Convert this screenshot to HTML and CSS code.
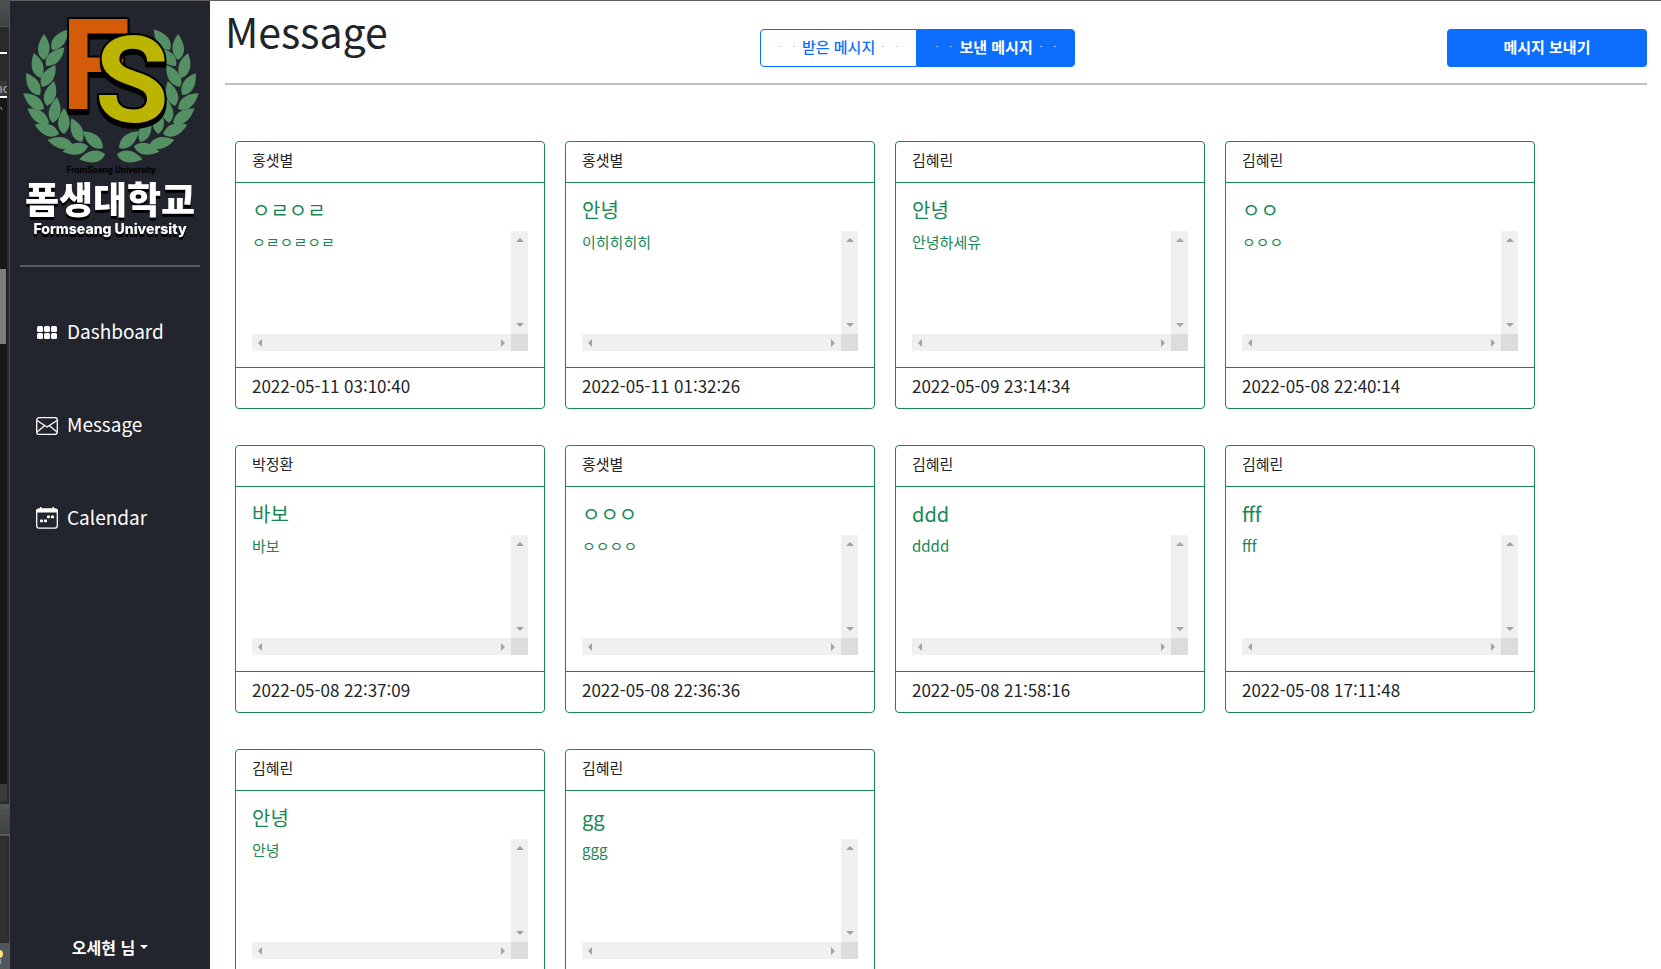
FILE: index.html
```html
<!DOCTYPE html>
<html lang="ko">
<head>
<meta charset="utf-8">
<title>Message</title>
<link rel="stylesheet" href="styles.css">
</head>
<body>
<svg class="defs" width="0" height="0" aria-hidden="true">
  <defs>
    <path id="leaf" d="M0 0C5 -8 15 -8 26 0C17 7 7 8 0 0Z"/>
  </defs>
</svg>
<div class="app">
  <div class="edge" aria-hidden="true">
    <svg class="edge-top" width="10" height="344" viewBox="0 0 10 344">
      <defs><linearGradient id="bar" x1="0" y1="0" x2="0" y2="1"><stop offset="0" stop-color="#4f5052"/><stop offset="1" stop-color="#404143"/></linearGradient></defs>
      <rect width="9" height="26" fill="url(#bar)"/>
      <rect y="26" width="9" height="1" fill="#555"/>
      <rect y="81" width="7" height="15" fill="#383838"/>
      <rect y="52" width="7" height="2" fill="#fff"/>
      <text x="-4" y="93" class="edge-text">ac</text>
      <rect x="7" y="54" width="2" height="42" fill="#2a2a2a"/>
      <rect y="96" width="7" height="2" fill="#fff"/>
      <rect y="98" width="7" height="246" fill="#171717"/>
      <path d="M-2 110L1 107L2 110" stroke="#888" fill="none"/>
      <rect y="269" width="6" height="75" fill="#7d7d7d"/>
    </svg>
    <div class="edge-fill"></div>
    <svg class="edge-bottom" width="10" height="185" viewBox="0 0 10 185">
      <rect width="7" height="18" fill="#3a3a3a"/>
      <rect y="20" width="10" height="5" fill="#50575a"/>
      <rect y="25" width="10" height="25" fill="url(#bar)"/>
      <rect y="50" width="10" height="2" fill="#5a5a5a"/>
      <rect y="53" width="7" height="105" fill="#303030"/>
      <rect y="159" width="10" height="26" fill="#50565a"/>
      <circle cx="-1" cy="170" r="4" fill="#ffe27a"/>
      <rect y="175" width="1" height="5" fill="#7fa0c8"/>
    </svg>
  </div>

  <nav class="sidebar">
    <a class="logo" href="#">
      <svg width="200" height="249" viewBox="10 1 200 249" role="img" aria-label="Formseang University">
        <g fill="#559064">
          <g id="branch">
            <use href="#leaf" transform="translate(52 50) rotate(-52)"/>
            <use href="#leaf" transform="translate(44 60) rotate(-90)"/>
            <use href="#leaf" transform="translate(46 66) rotate(-45)"/>
            <use href="#leaf" transform="translate(41 78) rotate(-106)"/>
            <use href="#leaf" transform="translate(42 87) rotate(-59)"/>
            <use href="#leaf" transform="translate(40 95) rotate(-122)"/>
            <use href="#leaf" transform="translate(47 106) rotate(-74)"/>
            <use href="#leaf" transform="translate(44 109) rotate(-143)"/>
            <use href="#leaf" transform="translate(53 123) rotate(-81)"/>
            <use href="#leaf" transform="translate(49 123) rotate(-146)"/>
            <use href="#leaf" transform="translate(64 134) rotate(-90)"/>
            <use href="#leaf" transform="translate(59 134) rotate(-159)"/>
            <use href="#leaf" transform="translate(82 142) rotate(-114)"/>
            <use href="#leaf" transform="translate(73 145) rotate(-169)"/>
            <use href="#leaf" transform="translate(103 148) rotate(-140)"/>
            <use href="#leaf" transform="translate(88 146) rotate(167)"/>
            <use href="#leaf" transform="translate(105 154) rotate(168)"/>
          </g>
          <use href="#branch" transform="translate(222 0) scale(-1 1)"/>
        </g>
        <text class="mono mono-f" x="61" y="109">F</text>
        <text class="mono mono-s" x="95" y="122">S</text>
        <text class="logo-small" x="111" y="173">FromSaeng University</text>
        <text class="logo-ko" x="110" y="214">폼생대학교</text>
        <text class="logo-en" x="110" y="234">Formseang University</text>
      </svg>
    </a>
    <hr class="side-line">
    <ul class="menu">
      <li><a href="#"><svg width="22" height="22" viewBox="0 0 22 22" fill="#fff"><rect x="1" y="5" width="6" height="6" rx="1.5"/><rect x="8" y="5" width="6" height="6" rx="1.5"/><rect x="15" y="5" width="6" height="6" rx="1.5"/><rect x="1" y="12" width="6" height="6" rx="1.5"/><rect x="8" y="12" width="6" height="6" rx="1.5"/><rect x="15" y="12" width="6" height="6" rx="1.5"/></svg><span>Dashboard</span></a></li>
      <li><a href="#"><svg width="22" height="22" viewBox="0 0 22 22" fill="none" stroke="#fff" stroke-width="1.3"><rect x=".7" y="3.7" width="20.6" height="16.6" rx="2.4"/><path d="M1 6.5L11 13L21 6.5M1 18L8.8 11.6M21 18L13.2 11.6"/></svg><span>Message</span></a></li>
      <li><a href="#"><svg width="22" height="22" viewBox="0 0 22 22" fill="#fff"><rect x=".7" y="2.2" width="20.6" height="19" rx="2.4" fill="none" stroke="#fff" stroke-width="1.3"/><path d="M0 5.5V4Q0 1.5 2.5 1.5H4V0H5.5V1.5H16.5V0H18V1.5H19.5Q22 1.5 22 4V5.5Z"/><rect x="11" y="8.5" width="3" height="2.7" rx=".6"/><rect x="15" y="8.5" width="3" height="2.7" rx=".6"/><rect x="4" y="12.5" width="3" height="2.7" rx=".6"/><rect x="8" y="12.5" width="3" height="2.7" rx=".6"/></svg><span>Calendar</span></a></li>
    </ul>
    <button class="user" type="button">오세현 님<span class="caret"></span></button>
  </nav>

  <main class="content">
    <header class="top">
      <h1>Message</h1>
      <div class="tabs">
        <button type="button" class="tab"><i></i><i></i><span>받은 메시지</span><i></i><i></i></button>
        <button type="button" class="tab active"><i></i><i></i><span>보낸 메시지</span><i></i><i></i></button>
      </div>
      <button type="button" class="send">메시지 보내기</button>
    </header>

    <section class="cards">
      <article class="card"><div class="name">홍샛별</div><div class="body"><h2>ㅇㄹㅇㄹ</h2><div class="pane"><p>ㅇㄹㅇㄹㅇㄹ</p><div class="vbar"><b class="up"></b><b class="down"></b></div><div class="hbar"><b class="left"></b><b class="right"></b></div><div class="corner"></div></div></div><time>2022-05-11 03:10:40</time></article>
      <article class="card"><div class="name">홍샛별</div><div class="body"><h2>안녕</h2><div class="pane"><p>이히히히히</p><div class="vbar"><b class="up"></b><b class="down"></b></div><div class="hbar"><b class="left"></b><b class="right"></b></div><div class="corner"></div></div></div><time>2022-05-11 01:32:26</time></article>
      <article class="card"><div class="name">김혜린</div><div class="body"><h2>안녕</h2><div class="pane"><p>안녕하세유</p><div class="vbar"><b class="up"></b><b class="down"></b></div><div class="hbar"><b class="left"></b><b class="right"></b></div><div class="corner"></div></div></div><time>2022-05-09 23:14:34</time></article>
      <article class="card"><div class="name">김혜린</div><div class="body"><h2>ㅇㅇ</h2><div class="pane"><p>ㅇㅇㅇ</p><div class="vbar"><b class="up"></b><b class="down"></b></div><div class="hbar"><b class="left"></b><b class="right"></b></div><div class="corner"></div></div></div><time>2022-05-08 22:40:14</time></article>
      <article class="card"><div class="name">박정환</div><div class="body"><h2>바보</h2><div class="pane"><p>바보</p><div class="vbar"><b class="up"></b><b class="down"></b></div><div class="hbar"><b class="left"></b><b class="right"></b></div><div class="corner"></div></div></div><time>2022-05-08 22:37:09</time></article>
      <article class="card"><div class="name">홍샛별</div><div class="body"><h2>ㅇㅇㅇ</h2><div class="pane"><p>ㅇㅇㅇㅇ</p><div class="vbar"><b class="up"></b><b class="down"></b></div><div class="hbar"><b class="left"></b><b class="right"></b></div><div class="corner"></div></div></div><time>2022-05-08 22:36:36</time></article>
      <article class="card"><div class="name">김혜린</div><div class="body"><h2>ddd</h2><div class="pane"><p>dddd</p><div class="vbar"><b class="up"></b><b class="down"></b></div><div class="hbar"><b class="left"></b><b class="right"></b></div><div class="corner"></div></div></div><time>2022-05-08 21:58:16</time></article>
      <article class="card"><div class="name">김혜린</div><div class="body"><h2>fff</h2><div class="pane"><p>fff</p><div class="vbar"><b class="up"></b><b class="down"></b></div><div class="hbar"><b class="left"></b><b class="right"></b></div><div class="corner"></div></div></div><time>2022-05-08 17:11:48</time></article>
      <article class="card"><div class="name">김혜린</div><div class="body"><h2>안녕</h2><div class="pane"><p>안녕</p><div class="vbar"><b class="up"></b><b class="down"></b></div><div class="hbar"><b class="left"></b><b class="right"></b></div><div class="corner"></div></div></div></article>
      <article class="card"><div class="name">김혜린</div><div class="body"><h2>gg</h2><div class="pane"><p>ggg</p><div class="vbar"><b class="up"></b><b class="down"></b></div><div class="hbar"><b class="left"></b><b class="right"></b></div><div class="corner"></div></div></div></article>
    </section>
  </main>
</div>
</body>
</html>
```
FILE: styles.css
```css
* { box-sizing: border-box; }
body {
  margin: 0;
  font-family: "Noto Sans CJK KR", sans-serif;
  font-size: 15px;
  line-height: 24px;
  color: #212529;
  background: #fff;
}
h1, h2, p, ul, i, b { margin: 0; padding: 0; font-weight: 400; }
button { font-family: inherit; cursor: pointer; }
.defs { display: block; height: 0; }
.app { display: flex; height: 100vh; overflow: hidden; }

.edge {
  width: 10px;
  flex: none;
  display: flex;
  flex-direction: column;
  background: #2a2a2a;
  border-right: 1px solid #505050;
}
.edge svg { display: block; flex: none; }
.edge-text { font-size: 12px; fill: #a9a9a9; }
.edge-fill { flex: 1; width: 7px; background: #171717; }

.sidebar {
  width: 200px;
  flex: none;
  display: flex;
  flex-direction: column;
  background: #22252d;
  border-top: 1px solid #606060;
}
.logo, .logo svg { display: block; }
.mono {
  font-family: Roboto, sans-serif;
  font-weight: 700;
  stroke: #000;
  stroke-width: 4px;
  stroke-linejoin: round;
  paint-order: stroke;
  filter: drop-shadow(0 4px 0 #000);
}
.mono-f { font-size: 126px; fill: #d45b07; }
.mono-s { font-size: 120px; fill: #bbb400; }
.logo-small { font: 700 9px Roboto, sans-serif; text-anchor: middle; fill: #000; }
.logo-ko {
  font: 900 37px "Noto Sans CJK KR", sans-serif;
  text-anchor: middle;
  fill: #fff;
  filter: drop-shadow(0 3px 0 #000);
}
.logo-en {
  font: 800 14px Inter, sans-serif;
  text-anchor: middle;
  fill: #fff;
  filter: drop-shadow(0 3px 0 #000);
}
.side-line { width: 180px; height: 2px; margin: 15px 10px 0; border: 0; background: #5a5c61; }
.menu { list-style: none; margin-top: 49px; display: grid; gap: 61px; }
.menu a {
  display: flex;
  align-items: center;
  gap: 9px;
  height: 32px;
  padding-left: 26px;
  color: #fff;
  font-size: 19px;
  text-decoration: none;
}
.menu span { padding-bottom: 2px; }
.user {
  display: flex;
  align-items: center;
  justify-content: center;
  gap: 5px;
  margin-top: auto;
  padding: 0 0 10px;
  border: 0;
  background: none;
  color: #fff;
  font-size: 16px;
  font-weight: 700;
  line-height: 24px;
}
.caret { border: 4px solid transparent; border-top-color: #fff; border-bottom: 0; }

.content { flex: 1; min-width: 0; padding: 0 14px 0 15px; border-top: 1px solid #606060; overflow: hidden; }
.top {
  display: flex;
  justify-content: space-between;
  align-items: flex-start;
  height: 84px;
  border-bottom: 2px solid #bfbfbf;
}
h1 { font-size: 41px; line-height: 48px; margin-top: 5px; }
.tabs { display: flex; width: 315px; margin-top: 28px; }
.tab {
  flex: 1;
  display: flex;
  align-items: center;
  justify-content: center;
  gap: 12px;
  height: 38px;
  padding: 0 0 4px;
  border: 1px solid #0d6efd;
  border-radius: 4px 0 0 4px;
  background: #fff;
  color: #0d6efd;
  font-size: 15px;
  font-weight: 500;
}
.tab span { margin: 0 -5px; }
.tab i { width: 2px; height: 1px; background: currentColor; opacity: 0.3; }
.tab.active { border-radius: 0 4px 4px 0; background: #0d6efd; color: #fff; font-weight: 700; }
.tab.active i { opacity: 0.6; }
.send {
  width: 200px;
  height: 38px;
  margin-top: 28px;
  padding: 0 0 4px;
  border: 0;
  border-radius: 4px;
  background: #0d6efd;
  color: #fff;
  font-size: 15px;
  font-weight: 700;
}

.cards {
  display: grid;
  grid-template-columns: repeat(auto-fill, 310px);
  gap: 36px 20px;
  padding: 56px 10px 0;
}
.card { height: 268px; border: 1px solid #198754; border-radius: 4px; }
.name { height: 41px; padding: 6px 16px; border-bottom: 1px solid #198754; }
.body { padding: 16px; color: #198754; }
h2 { font-size: 20px; line-height: 22px; margin-bottom: 10px; }
.pane { display: grid; grid-template: 103px 17px / 1fr 17px; }
.pane p { line-height: 22px; }
.vbar, .hbar { display: flex; justify-content: space-between; align-items: center; background: #f0f0f0; }
.vbar { flex-direction: column; padding: 7px 0; }
.hbar { padding: 0 6px; }
.corner { background: #dcdcdc; }
.pane b { border: 4px solid transparent; }
.pane .up { border-top: 0; border-bottom-color: #a3a3a3; }
.pane .down { border-bottom: 0; border-top-color: #a3a3a3; }
.pane .left { border-left: 0; border-right-color: #a3a3a3; }
.pane .right { border-right: 0; border-left-color: #a3a3a3; }
time { display: block; padding: 6px 16px; border-top: 1px solid #198754; font-size: 17px; }
```
